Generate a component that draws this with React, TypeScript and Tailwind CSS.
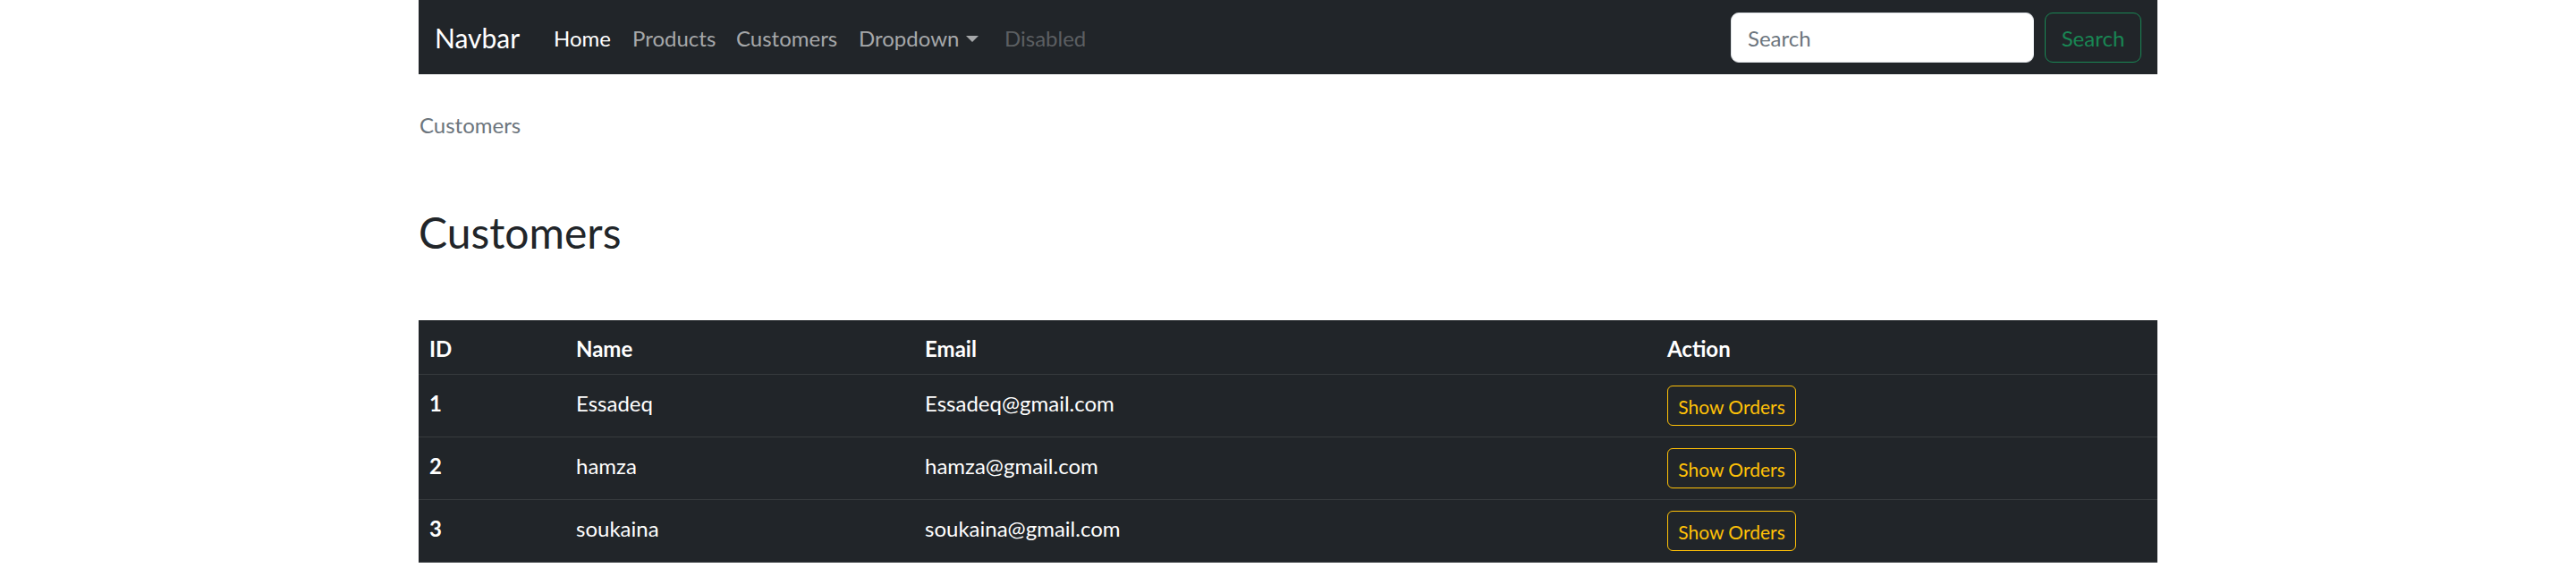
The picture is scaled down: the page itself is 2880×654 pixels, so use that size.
import React from 'react';

type Customer = { id: number; name: string; email: string };

const customers: Customer[] = [
  { id: 1, name: 'Essadeq', email: 'Essadeq@gmail.com' },
  { id: 2, name: 'hamza', email: 'hamza@gmail.com' },
  { id: 3, name: 'soukaina', email: 'soukaina@gmail.com' },
];

const Navbar: React.FC = () => (
  <nav className="h-[83px] bg-[#212529] flex items-center pl-[18px] pr-[18px]">
    <a className="w-[121px] pt-[2px] text-[30px] leading-[45px] text-white">Navbar</a>
    <ul className="flex items-center pt-[3px] text-[24px] leading-[36px]">
      <li className="w-[88px] pl-[12px] text-white">Home</li>
      <li className="w-[116px] pl-[12px] text-[#a6a8aa]">Products</li>
      <li className="w-[137px] pl-[12px] text-[#a6a8aa]">Customers</li>
      <li className="w-[163px] pl-[12px] text-[#a6a8aa] flex items-center">
        Dropdown
        <span className="ml-[8px] mt-[1px] w-0 h-0 border-t-[7px] border-t-[#a6a8aa] border-x-[7px] border-x-transparent" />
      </li>
      <li className="pl-[12px] text-[#5c5f62]">Disabled</li>
    </ul>
    <form className="ml-auto flex items-center gap-[12px]">
      <input
        type="search"
        placeholder="Search"
        className="w-[339px] h-[56px] rounded-[9px] border border-[#dee2e6] bg-white px-[18px] pt-[2px] text-[24px] text-[#212529] placeholder:text-[#6c757d] outline-none"
      />
      <button
        type="button"
        className="w-[108px] h-[56px] rounded-[9px] border border-[#198754] pt-[2px] text-[24px] text-[#198754]"
      >
        Search
      </button>
    </form>
  </nav>
);

const App: React.FC = () => {
  return (
    <div className="w-full h-[654px] overflow-hidden bg-white font-[Lato,'Liberation_Sans',sans-serif] text-[#212529]">
      <div className="mx-auto w-[1944px]">
        <Navbar />

        <div className="mt-[39px] pl-[1px] text-[24px] leading-[36px] text-[#6c757d]">Customers</div>

        <h2 className="mt-[73px] text-[48px] leading-[58px] font-normal">Customers</h2>

        <table className="mt-[69px] w-full table-fixed border-collapse bg-[#212529] text-white text-[24px] leading-[36px]">
          <colgroup>
            <col className="w-[164px]" />
            <col className="w-[390px]" />
            <col className="w-[830px]" />
            <col className="w-[560px]" />
          </colgroup>
          <thead>
            <tr className="border-b border-[#373b3e]">
              <th className="px-[12px] pt-[14px] pb-[10px] text-left font-bold align-top">ID</th>
              <th className="px-[12px] pt-[14px] pb-[10px] text-left font-bold align-top">Name</th>
              <th className="px-[12px] pt-[14px] pb-[10px] text-left font-bold align-top">Email</th>
              <th className="px-[12px] pt-[14px] pb-[10px] text-left font-bold align-top">Action</th>
            </tr>
          </thead>
          <tbody>
            {customers.map(c => (
              <tr key={c.id} className="border-b border-[#373b3e]">
                <th className="px-[12px] pt-[14px] pb-[10px] text-left font-bold align-top">{c.id}</th>
                <td className="px-[12px] pt-[14px] pb-[10px] align-top">{c.name}</td>
                <td className="px-[12px] pt-[14px] pb-[10px] align-top">{c.email}</td>
                <td className="px-[12px] py-[12px] align-top">
                  <button
                    type="button"
                    className="w-[144px] h-[45px] rounded-[6px] border border-[#ffc107] pt-[2px] text-[21px] leading-[31px] text-[#ffc107]"
                  >
                    Show Orders
                  </button>
                </td>
              </tr>
            ))}
          </tbody>
        </table>
      </div>
    </div>
  );
};

export default App;
